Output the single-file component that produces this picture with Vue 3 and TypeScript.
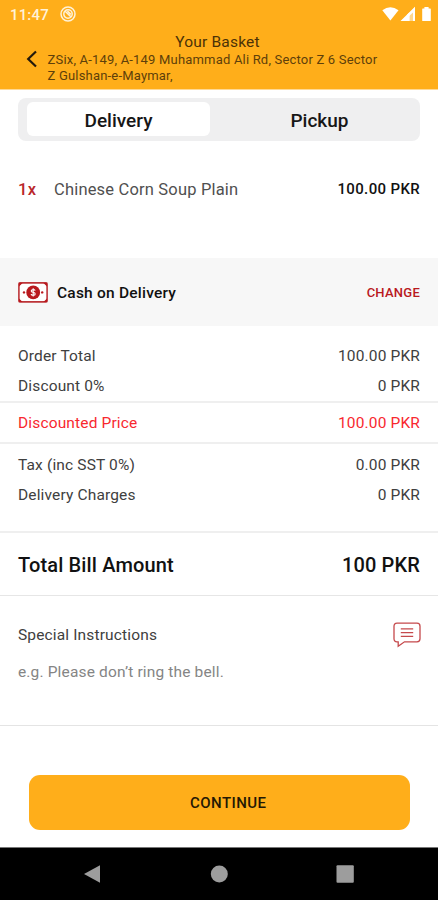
<script setup lang="ts">
import { ref } from 'vue'

interface ChargeRow {
  label: string
  value: string
}

const modes = ['Delivery', 'Pickup'] as const
const mode = ref<(typeof modes)[number]>('Delivery')

const subtotals: ChargeRow[] = [
  { label: 'Order Total', value: '100.00 PKR' },
  { label: 'Discount 0%', value: '0 PKR' },
]
const extras: ChargeRow[] = [
  { label: 'Tax (inc SST 0%)', value: '0.00 PKR' },
  { label: 'Delivery Charges', value: '0 PKR' },
]
</script>

<template>
  <div class="screen">
    <header class="header">
      <div class="status">
        <span class="clock">11:47</span>
        <svg class="dnd" viewBox="0 0 16 16" width="16" height="16">
          <circle cx="8" cy="8" r="7" />
          <circle cx="8" cy="8" r="4.2" />
          <path d="M5.2 5.2l5.6 5.6M7.4 5l3.4 3.4" />
        </svg>
        <svg class="signals" viewBox="0 0 50 16" width="50" height="16">
          <path d="M0.3 4.2Q8.4-1.8 16.5 4.2L8.4 14.4Z" />
          <path class="faint" d="M33 0.8V15H18.6Z" />
          <path d="M27.6 6.2V15H18.6Z" />
          <path d="M33 0.8V15H31V6.4L25 12V8.8Z" />
          <path d="M42.4 1h4.2v1.4h1.6q.6 0 .6.6v11.4q0 .6-.6.6h-7.4q-.6 0-.6-.6V3q0-.6.6-.6h1.6Z" />
        </svg>
      </div>
      <h1 class="title">Your Basket</h1>
      <div class="place">
        <svg class="back" viewBox="0 0 12 18" width="12" height="18">
          <path d="M10 1.5L2.2 9L10 16.5" />
        </svg>
        <p class="address">
          ZSix, A-149, A-149 Muhammad Ali Rd, Sector Z 6 Sector<br />
          Z Gulshan-e-Maymar,
        </p>
      </div>
    </header>

    <div class="tabs">
      <button
        v-for="m in modes"
        :key="m"
        class="tab"
        :class="{ active: m === mode }"
        @click="mode = m"
      >{{ m }}</button>
    </div>

    <div class="item">
      <span class="qty">1x</span>
      <span class="name">Chinese Corn Soup Plain</span>
      <span class="price">100.00 PKR</span>
    </div>

    <div class="payment">
      <svg class="cash" viewBox="0 0 30 21" width="30" height="21">
        <rect class="frame" x="0.9" y="0.9" width="28.2" height="19" rx="1" />
        <path d="M1 1h3.6L1 4.6ZM29 1v3.6L25.4 1ZM1 20v-3.6L4.600 20ZM29 20h-3.6L29 16.400Z" />
        <circle cx="15.200" cy="10.400" r="6.900" />
        <circle cx="6" cy="10.400" r="1.200" />
        <circle cx="24.200" cy="10.400" r="1.200" />
        <path class="dollar" d="M17.200 8.600Q16.800 7.600 15.200 7.600T13.200 9Q13.200 10.100 15.200 10.400T17.200 11.900Q17.200 13.200 15.200 13.200T13.200 12.100M15.200 6.200V14.600" />
      </svg>
      <span class="method">Cash on Delivery</span>
      <button class="change">CHANGE</button>
    </div>

    <section class="rows first">
      <div v-for="r in subtotals" :key="r.label" class="row">
        <span>{{ r.label }}</span><span>{{ r.value }}</span>
      </div>
    </section>
    <section class="rows discounted">
      <div class="row"><span>Discounted Price</span><span>100.00 PKR</span></div>
    </section>
    <section class="rows second">
      <div v-for="r in extras" :key="r.label" class="row">
        <span>{{ r.label }}</span><span>{{ r.value }}</span>
      </div>
    </section>
    <section class="total">
      <span>Total Bill Amount</span><span>100 PKR</span>
    </section>

    <section class="notes">
      <div class="notes-head">
        <span>Special Instructions</span>
        <svg class="chat" viewBox="0 0 28 26" width="28" height="26">
          <path d="M4 1.200H24Q27 1.200 27 4.200V16.800Q27 19.800 24 19.800H11.500L5.200 24.200V19.800H4Q1 19.800 1 16.800V4.200Q1 1.200 4 1.200Z" />
          <path d="M7.800 6.800H20.200M7.800 10.600H20.200M7.800 14.400H20.200" />
        </svg>
      </div>
      <p class="hint">e.g. Please don’t ring the bell.</p>
    </section>

    <div class="action">
      <button class="continue">CONTINUE</button>
    </div>

    <nav class="nav">
      <svg viewBox="0 0 438 52" width="438" height="52">
        <path d="M84 26L100 17.200V34.800Z" />
        <circle cx="219.300" cy="26" r="8.500" />
        <rect x="336.500" y="17.200" width="17.300" height="17.600" rx="1" />
      </svg>
    </nav>
  </div>
</template>

<style>
body {
  margin: 0;
  background: #fff;
}
</style>

<style scoped>
.screen {
  width: 438px;
  height: 900px;
  display: flex;
  flex-direction: column;
  overflow: hidden;
  background: #fff;
  color: #404040;
  font-family: Roboto, "Liberation Sans", sans-serif;
  font-size: 15.5px;
  letter-spacing: 0.15px;
}
.screen * {
  box-sizing: border-box;
}
button {
  border: 0;
  padding: 0;
  background: none;
  font: inherit;
  color: inherit;
  letter-spacing: inherit;
}
h1,
p {
  margin: 0;
}
svg {
  display: block;
  flex: none;
}
.header {
  flex: none;
  height: 90px;
  background: #ffae1a;
  border-bottom: 1px solid #ffd995;
}
.status {
  display: flex;
  align-items: center;
  height: 28px;
  padding: 0 6px 0 10px;
}
.clock {
  width: 50px;
  padding-top: 1px;
  color: #fff2d8;
  font-size: 15px;
  font-weight: 500;
}
.dnd {
  fill: none;
  stroke: #fff2d8;
  stroke-width: 1.5;
}
.signals {
  margin-left: auto;
  fill: #fff;
}
.faint {
  opacity: 0.5;
}
.title {
  height: 24px;
  margin-top: 2px;
  padding-right: 3px;
  color: #4b3207;
  font-size: 15.5px;
  line-height: 25px;
  font-weight: 400;
  letter-spacing: 0.2px;
  text-align: center;
}
.place {
  display: flex;
  align-items: flex-start;
  padding-left: 26px;
}
.back {
  margin: -4px 9.500px 0 0;
  fill: none;
  stroke: #241a0c;
  stroke-width: 2.2;
}
.address {
  margin-top: -2px;
  color: #5e3f0a;
  font-size: 13px;
  line-height: 16px;
  letter-spacing: 0.19px;
  white-space: nowrap;
}
.tabs {
  display: flex;
  flex: none;
  height: 43px;
  margin: 8px 18px 0;
  padding: 4px 9px 5px;
  border-radius: 8px;
  background: #efeff0;
}
.tab {
  width: 183px;
  padding-top: 2px;
  border-radius: 6px;
  color: #161616;
  font-size: 19px;
  font-weight: 500;
  letter-spacing: 0;
}
.tab + .tab {
  margin-left: 18px;
}
.active {
  background: #fff;
}
.item {
  display: flex;
  align-items: center;
  flex: none;
  height: 96px;
  margin-top: 21px;
  padding: 0 18px 42px;
}
.qty {
  width: 36px;
  color: #b9262b;
  font-size: 16.5px;
  font-weight: 500;
  letter-spacing: 0.4px;
}
.name {
  color: #505050;
  font-size: 16.500px;
  letter-spacing: 0.18px;
}
.price {
  margin-left: auto;
  color: #111;
  font-size: 15px;
  font-weight: 500;
  letter-spacing: 0.35px;
}
.payment {
  display: flex;
  align-items: center;
  flex: none;
  height: 68px;
  padding: 1px 18px 0;
  background: #f7f7f7;
}
.cash {
  margin-right: 9px;
  fill: #b9191e;
}
.frame {
  fill: #fff;
  stroke: #bd3438;
  stroke-width: 1.6;
}
.dollar {
  fill: none;
  stroke: #fff;
  stroke-width: 1.1;
}
.method {
  color: #111;
  font-size: 15.5px;
  font-weight: 500;
  letter-spacing: 0.22px;
}
.change {
  margin-left: auto;
  color: #b9191e;
  font-size: 13px;
  font-weight: 500;
  letter-spacing: 0.25px;
}
.rows {
  flex: none;
  padding: 0 18px;
  border-bottom: 2px solid #efefef;
}
.row {
  display: flex;
  align-items: center;
  justify-content: space-between;
  height: 30px;
}
.first {
  height: 77px;
  padding-top: 14.5px;
}
.discounted {
  height: 41px;
  padding-top: 5px;
  color: #f8282f;
}
.second {
  height: 89px;
  padding-top: 5.5px;
}
.total {
  display: flex;
  align-items: center;
  justify-content: space-between;
  flex: none;
  height: 63px;
  padding: 1px 18px 0;
  border-bottom: 1px solid #e6e6e6;
  color: #111;
  font-size: 20px;
  font-weight: 500;
}
.notes {
  flex: none;
  height: 130px;
  padding: 24px 18px 0;
  border-bottom: 1px solid #e4e4e4;
}
.notes-head {
  display: flex;
  align-items: center;
  justify-content: space-between;
  height: 30px;
}
.chat {
  margin-right: -1px;
  fill: none;
  stroke: #c5494c;
  stroke-width: 1.3;
}
.hint {
  margin-top: 13px;
  color: #858585;
  line-height: 18px;
}
.action {
  height: 121px;
  flex: none;
  padding: 48.5px 28px 0 28.5px;
}
.continue {
  width: 381.5px;
  height: 55.5px;
  padding: 2px 0 0 18px;
  border-radius: 11px;
  background: #ffae1a;
  color: #241804;
  font-size: 15px;
  font-weight: 500;
  letter-spacing: 0.45px;
}
.nav {
  height: 53px;
  flex: none;
  border-top: 1px solid #777;
  background: #000;
  fill: #9d9d9d;
}
</style>
